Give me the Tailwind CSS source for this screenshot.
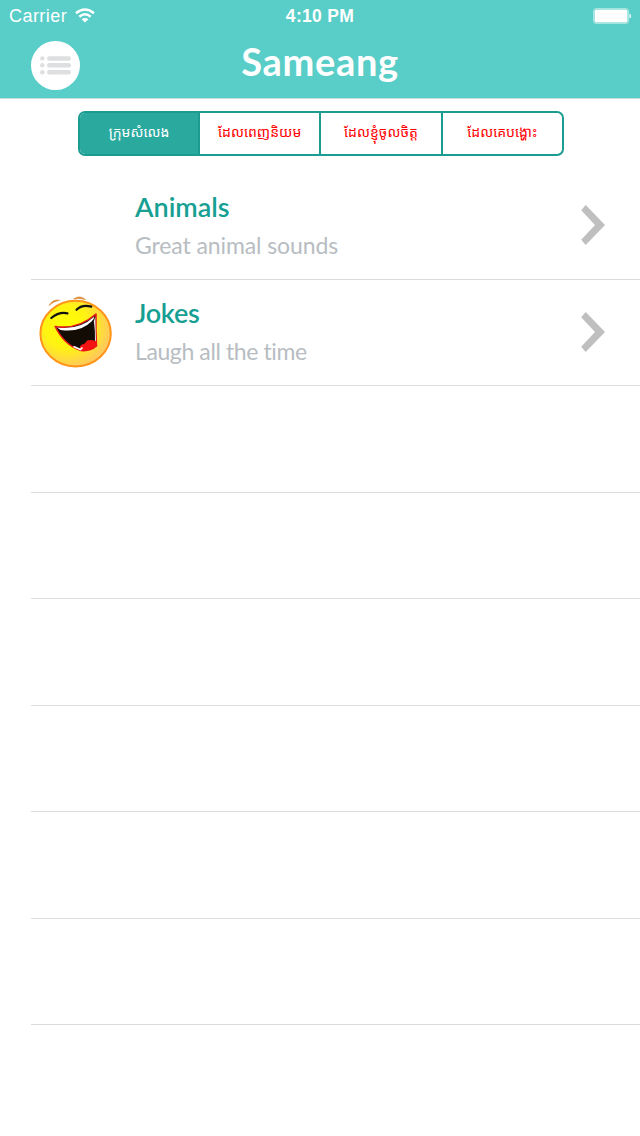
<!DOCTYPE html>
<html lang="km">
  <head>
    <meta charset="utf-8" />
    <meta content="width=device-width, initial-scale=1.0" name="viewport" />
    <title>Sameang</title>
    <script src="https://cdn.jsdelivr.net/npm/@tailwindcss/browser@4"></script>
  </head>
  <body class="bg-white w-[640px] h-[1136px] overflow-hidden font-['Lato',sans-serif]">
    <header class="h-[99px] bg-[#59cdc7] border-b border-[#c5dedc] text-white">
      <!-- Status bar -->
      <div class="h-8 grid grid-cols-3 items-center pl-[9px] pr-[9px] font-['Liberation_Sans',sans-serif] text-[18px]">
        <div class="flex items-center gap-2">
          <span class="tracking-[0.45px]">Carrier</span>
          <svg class="w-5 h-[15px] -mt-0.5" viewBox="0 0 20 15" fill="none" stroke="currentColor" stroke-width="2.5">
            <path d="M1 5.3Q10 -2.2 19 5.3" />
            <path d="M4.3 8.7Q10 3.8 15.7 8.7" />
            <path d="M10 14.5L6.6 11.2Q10 8.6 13.4 11.2Z" fill="currentColor" stroke="none" />
          </svg>
        </div>
        <span class="text-center font-bold text-[17.5px] tracking-[0.3px]">4:10 PM</span>
        <svg class="justify-self-end w-[38px] h-4" viewBox="0 0 38 16">
          <rect x="0.5" y="0.5" width="35" height="15" rx="2.5" fill="none" stroke="#a5e4e0" />
          <rect x="1.5" y="1.5" width="33" height="13" rx="1.5" fill="#fff" />
          <path d="M36.5 5.5Q38 6 38 8T36.5 10.5Z" fill="#fff" />
        </svg>
      </div>
      <!-- Title bar -->
      <div class="h-[66px] grid grid-cols-[80px_1fr_80px] items-center">
        <button class="justify-self-end w-[49px] h-[49px] rounded-full bg-white flex items-center justify-center">
          <svg class="w-[31px] h-[19px]" viewBox="0 0 31 19" fill="#dedfe0">
            <circle cx="2.3" cy="2.4" r="2.2" />
            <circle cx="2.3" cy="9.3" r="2.2" />
            <circle cx="2.3" cy="16.2" r="2.2" />
            <rect x="7" y="0.2" width="24" height="4.5" rx="2.2" />
            <rect x="7" y="7.1" width="24" height="4.5" rx="2.2" />
            <rect x="7" y="14" width="24" height="4.5" rx="2.2" />
          </svg>
        </button>
        <h1 class="text-center text-[38px] leading-[48px] -mt-2 font-bold tracking-[0.7px]">Sameang</h1>
      </div>
    </header>

    <main>
      <div class="h-[74px] pt-3 pl-[78px]">
        <div class="w-[486px] h-[45px] flex rounded-[7px] border-2 border-[#1b9c90] overflow-hidden text-[14px] text-[#ff0000] font-['Noto_Sans_Khmer','Khmer_OS','Noto_Sans',sans-serif] divide-x-2 divide-[#1b9c90]">
          <button class="w-[120px] pb-1 whitespace-nowrap bg-[#2aa99e] text-white">ក្រុមសំលេង</button>
          <button class="flex-1 pb-1 whitespace-nowrap">ដែលពេញនិយម</button>
          <button class="flex-1 pb-1 whitespace-nowrap">ដែលខ្ញុំចូលចិត្ត</button>
          <button class="flex-1 pb-1 whitespace-nowrap">ដែលគេបង្ហោះ</button>
        </div>
      </div>

      <ul class="pl-[31px]">
        <li class="h-[106.5px] border-b border-[#dcdcdc] flex items-center">
          <div class="w-[104px]"></div>
          <div class="flex-1">
            <h2 class="text-[27px] leading-[38px] font-semibold text-[#169f92]">Animals</h2>
            <p class="text-[23px] leading-[38px] text-[#b7bdc2] tracking-[-0.1px] [font-variant-ligatures:none]">Great animal sounds</p>
          </div>
          <svg class="w-6 h-10 mr-[35px] -mt-px" viewBox="0 0 24 40"><path d="M0.2 5.2L4.7 0L24 20L4.7 40L0.2 34.8L14 20Z" fill="#bfbfbf" /></svg>
        </li>
        <li class="h-[106.5px] border-b border-[#dcdcdc] flex items-center">
          <div class="w-[104px] pl-2">
            <svg class="w-[74px] h-[72px] -mt-px" viewBox="0 0 74 72">
              <defs>
                <radialGradient id="face" cx="0.38" cy="0.4" r="0.65">
                  <stop offset="0" stop-color="#ffff00" />
                  <stop offset="0.5" stop-color="#fff313" />
                  <stop offset="1" stop-color="#ffc562" />
                </radialGradient>
              </defs>
              <ellipse cx="36.6" cy="37.6" rx="35.2" ry="32.8" fill="url(#face)" stroke="#ff9418" stroke-width="2" />
              <path d="M10 9.5Q14 3 20.5 4.2Q15 5 10 9.5ZM34.5 3Q41 -1.5 46.5 3.6Q40 1.5 34.5 3Z" fill="#d9862b" stroke="#d9862b" stroke-width="0.6" />
              <path d="M12.3 22Q20 15.5 28.5 17.3M37.5 13.8Q43 8 52.3 10.6" fill="none" stroke="#111" stroke-width="2.2" stroke-linecap="round" />
              <path d="M16.2 30.5Q39 34 57 18Q56.5 34 57.5 50Q51 55.5 42 54.5Q25 49 16.2 30.5Z" fill="#120c05" stroke="#e61b1b" stroke-width="1.6" stroke-linejoin="round" />
              <path d="M18 31.5Q40 34.5 55.5 20.5Q55 23.5 52.5 25.5Q41 37 21.5 34Z" fill="#fff" />
              <path d="M54.8 25L56.3 21L57 46L56 45Q56.2 34 54.8 25Z" fill="#e4e4ed" />
              <path d="M42.5 54.5Q39 50.5 43 48.5Q46.5 48 47.5 45Q51 43 57.2 45.2L57.5 50Q51 55.5 42.5 54.5Z" fill="#f31313" />
              <path d="M34.5 50.5L41.5 53.5L43.5 51.5" fill="none" stroke="#fff" stroke-width="1.7" />
            </svg>
          </div>
          <div class="flex-1">
            <h2 class="text-[27px] leading-[38px] font-semibold text-[#169f92] tracking-[-0.3px]">Jokes</h2>
            <p class="text-[23px] leading-[38px] text-[#b7bdc2] tracking-[-0.4px] [font-variant-ligatures:none]">Laugh all the time</p>
          </div>
          <svg class="w-6 h-10 mr-[35px]" viewBox="0 0 24 40"><path d="M0.2 5.2L4.7 0L24 20L4.7 40L0.2 34.8L14 20Z" fill="#bfbfbf" /></svg>
        </li>
        <li class="h-[106.5px] border-b border-[#dcdcdc]"></li>
        <li class="h-[106.5px] border-b border-[#dcdcdc]"></li>
        <li class="h-[106.5px] border-b border-[#dcdcdc]"></li>
        <li class="h-[106.5px] border-b border-[#dcdcdc]"></li>
        <li class="h-[106.5px] border-b border-[#dcdcdc]"></li>
        <li class="h-[106.5px] border-b border-[#dcdcdc]"></li>
      </ul>
    </main>
  </body>
</html>
